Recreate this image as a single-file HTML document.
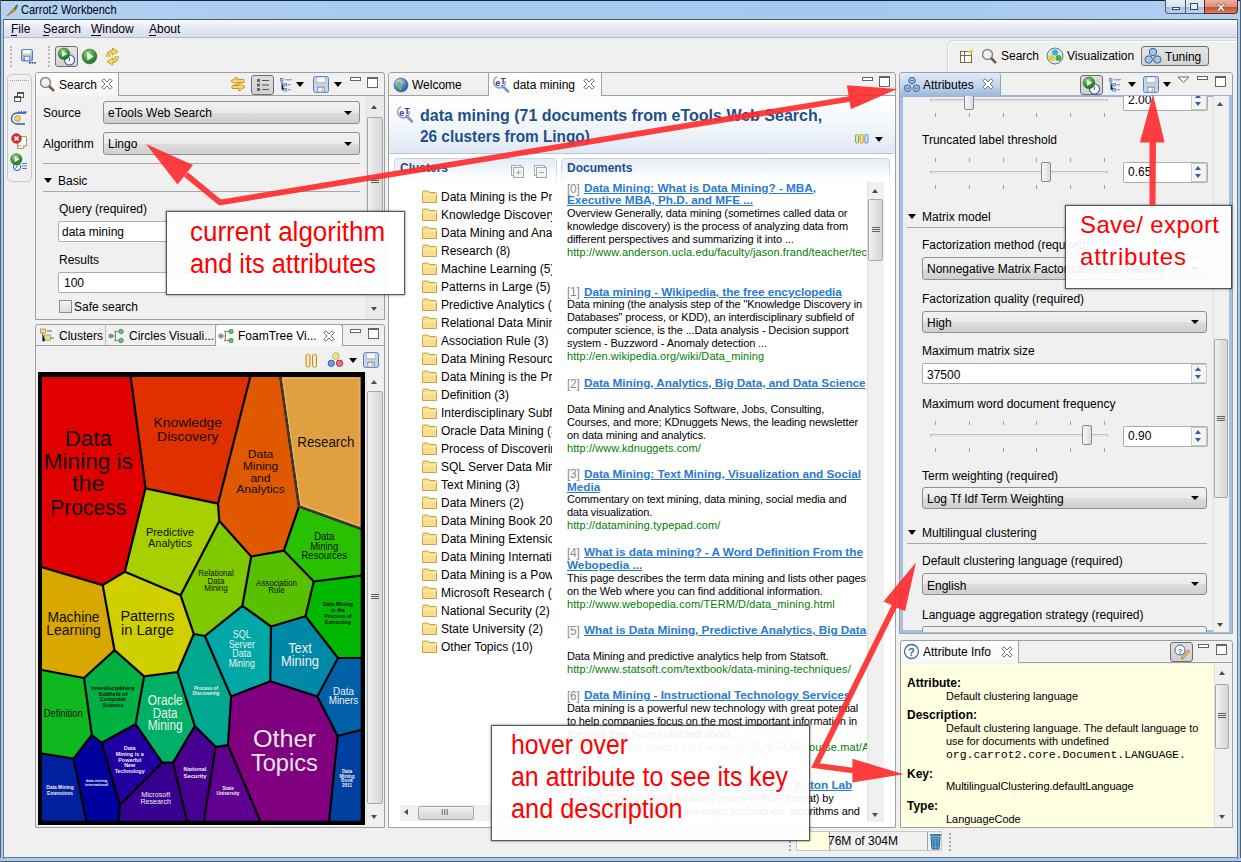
<!DOCTYPE html>
<html><head><meta charset="utf-8">
<style>
*{box-sizing:border-box;margin:0;padding:0}
html,body{width:1241px;height:862px;overflow:hidden;background:#f0f0f0;font-family:"Liberation Sans",sans-serif;font-size:12px;color:#000}
.a{position:absolute}
.t{position:absolute;white-space:pre;line-height:1}
.panel{position:absolute;border:1px solid #a0a0a0;border-radius:3px 3px 0 0;background:#f0f0f0}
.tabline{position:absolute;height:1px;background:#a0a0a0}
.combo{position:absolute;border:1px solid #8e8f8f;border-radius:3px;background:linear-gradient(#f2f2f2,#ebebeb 50%,#dddddd 51%,#cfcfcf)}
.combo:after{content:"";position:absolute;right:7px;top:50%;margin-top:-2px;border-left:4px solid transparent;border-right:4px solid transparent;border-top:4px solid #000}
.field{position:absolute;background:#fff;border:1px solid #abadb3;border-top-color:#abadb3;border-radius:2px}
.sb{position:absolute;background:#eaeaea;border-left:1px solid #e0e0e0}
.thumb{position:absolute;border:1px solid #a8a8a8;border-radius:2px;background:linear-gradient(90deg,#f3f3f3,#e2e2e2 50%,#d6d6d6)}
.up{position:absolute;width:0;height:0;border-left:3.5px solid transparent;border-right:3.5px solid transparent;border-bottom:4px solid #4d4d4d}
.dn{position:absolute;width:0;height:0;border-left:3.5px solid transparent;border-right:3.5px solid transparent;border-top:4px solid #4d4d4d}
.tri{position:absolute;width:0;height:0;border-left:4px solid transparent;border-right:4px solid transparent;border-top:5px solid #000}
.minb{position:absolute;width:11px;height:4px;border:1px solid #666;background:#fff}
.maxb{position:absolute;width:11px;height:11px;border:1px solid #666;border-top-width:2px;background:#fff}
.doc{position:absolute;left:567px;font-size:11px;line-height:13px;white-space:pre;color:#000}
.dt{color:#2477d0;font-weight:bold;text-decoration:underline;font-size:11.5px}
.dn2{color:#8a8a8a}
.url{color:#008000}
.lbl{position:absolute;white-space:pre;font-size:12px;line-height:1}
.box{position:absolute;background:rgba(255,255,255,0.93);box-shadow:0 0 1px 1px rgba(50,50,50,0.75),0 0 3px 1px rgba(0,0,0,0.3)}
.red{position:absolute;white-space:pre;color:#ff0000;font-size:27px;line-height:1;transform-origin:0 0}
.grip{position:absolute;width:8px;height:5px;border-top:1px solid #606060;border-bottom:1px solid #606060;background:linear-gradient(#606060,#606060) 0 1px/100% 1px no-repeat}
</style></head><body>
<!-- window frame -->
<div class="a" style="left:0;top:0;width:1241px;height:19px;background:linear-gradient(90deg,#b4d2f2,#a6caf0 30%,#a4c8ef 70%,#b0d0f2)"></div>
<div class="a" style="left:0;top:0;width:1241px;height:1px;background:#1a2433"></div>
<div class="a" style="left:0;top:19px;width:4px;height:843px;background:#a6caf0"></div>
<div class="a" style="left:0;top:0;width:1px;height:862px;background:#54606e"></div>
<div class="a" style="left:1237px;top:19px;width:4px;height:843px;background:#a6caf0"></div>
<div class="a" style="left:1240px;top:0;width:1px;height:862px;background:#54606e"></div>
<div class="a" style="left:0;top:858px;width:1241px;height:4px;background:#a6caf0"></div>
<div class="a" style="left:0;top:861px;width:1241px;height:1px;background:#54606e"></div>
<div class="a" style="left:4px;top:19px;width:1233px;height:1px;background:#4a5a6c"></div>
<div class="a" style="left:3px;top:19px;width:1px;height:840px;background:#6a7c90"></div>
<div class="a" style="left:1237px;top:19px;width:1px;height:840px;background:#6a7c90"></div>
<div class="a" style="left:3px;top:857px;width:1235px;height:1px;background:#6a7c90"></div>
<!-- carrot icon -->
<svg class="a" style="left:5px;top:3px" width="14" height="14" viewBox="0 0 14 14"><path d="M2 13 L9 5 L11 7 Z" fill="#f08c20" stroke="#a05010" stroke-width="0.6"/><path d="M9 5 L12 1 L13 3 L11 7 Z" fill="#3a8a30"/></svg>
<div class="t" style="left:21px;top:4px;font-size:12px;color:#000;transform:scaleX(0.92);transform-origin:0 0">Carrot2 Workbench</div>
<!-- window buttons -->
<div class="a" style="left:1165px;top:0;width:21px;height:14px;border:1px solid #4a5a70;border-top:none;border-right:none;border-radius:0 0 0 4px;background:linear-gradient(#e4edf8,#d4e2f2 50%,#a8bcd8 51%,#c0d4ec)"></div>
<div class="a" style="left:1185px;top:0;width:20px;height:14px;border-left:1px solid #4a5a70;border-bottom:1px solid #4a5a70;background:linear-gradient(#e4edf8,#d4e2f2 50%,#a8bcd8 51%,#c0d4ec)"></div>
<div class="a" style="left:1204px;top:0;width:34px;height:14px;border:1px solid #5a2a20;border-top:none;border-radius:0 0 4px 0;background:linear-gradient(#eeb0a0,#e09080 50%,#c04830 51%,#e08060)"></div>
<div class="a" style="left:1172px;top:7px;width:8px;height:3px;border:1px solid #3a4a60;background:#fff"></div>
<div class="a" style="left:1190px;top:3px;width:8px;height:7px;border:1px solid #3a4a60;background:#e8eef6"></div>
<svg class="a" style="left:1216px;top:3px" width="10" height="9" viewBox="0 0 10 9"><path d="M1 1.5 L2.5 0.5 L5 3 L7.5 0.5 L9 1.5 L6.5 4.5 L9 7.5 L7.5 8.5 L5 6 L2.5 8.5 L1 7.5 L3.5 4.5Z" fill="#fff" stroke="#6a4a40" stroke-width="0.7"/></svg>
<!-- menu bar -->
<div class="a" style="left:4px;top:20px;width:1233px;height:18px;background:linear-gradient(#fafcfe,#e4e9f4 45%,#d8ddec)"></div>
<div class="a" style="left:4px;top:37px;width:1233px;height:1px;background:#b6bccc"></div>
<div class="t" style="left:11px;top:23px">File</div>
<div class="a" style="left:11px;top:35px;width:6px;height:1px;background:#000"></div>
<div class="t" style="left:43px;top:23px">Search</div>
<div class="a" style="left:43px;top:35px;width:6px;height:1px;background:#000"></div>
<div class="t" style="left:91px;top:23px">Window</div>
<div class="a" style="left:91px;top:35px;width:10px;height:1px;background:#000"></div>
<div class="t" style="left:149px;top:23px">About</div>
<div class="a" style="left:149px;top:35px;width:7px;height:1px;background:#000"></div>
<!-- main toolbar -->
<div class="a" style="left:10px;top:46px;width:2px;height:21px;border-left:2px dotted #b8b8b8"></div>
<svg class="a" style="left:20px;top:48px" width="18" height="18" viewBox="0 0 18 18"><defs><linearGradient id="fl" x1="0" y1="0" x2="0" y2="1"><stop offset="0" stop-color="#c8d8ee"/><stop offset="1" stop-color="#8aa6d0"/></linearGradient></defs><rect x="1.5" y="1.5" width="11" height="11.5" rx="1.2" fill="url(#fl)" stroke="#5a7cb0"/><rect x="3.5" y="2" width="7" height="4.5" fill="#fff"/><rect x="3.5" y="5.5" width="7" height="1" fill="#f0c060"/><rect x="4.5" y="8.5" width="5" height="4" fill="#e8eef8" stroke="#5a7cb0" stroke-width="0.6"/><rect x="9" y="14" width="1.6" height="1.6" fill="#1a3a80"/><rect x="11.6" y="14" width="1.6" height="1.6" fill="#1a3a80"/><rect x="14.2" y="14" width="1.6" height="1.6" fill="#1a3a80"/></svg>
<div class="a" style="left:48px;top:46px;width:2px;height:21px;border-left:2px dotted #b8b8b8"></div>
<div class="a" style="left:55px;top:46px;width:23px;height:21px;border:1px solid #6f6f6f;border-radius:3px;background:linear-gradient(#e4e4e4,#d2d2d2)"></div>
<svg class="a" style="left:57px;top:47px" width="20" height="20" viewBox="0 0 20 20"><defs><radialGradient id="gp" cx="0.4" cy="0.3" r="0.7"><stop offset="0" stop-color="#9ad890"/><stop offset="0.6" stop-color="#3a9a3a"/><stop offset="1" stop-color="#1f6a1f"/></radialGradient></defs><circle cx="12.5" cy="13" r="5" fill="#fff" stroke="#2a5ab0" stroke-width="1.1"/><path d="M12.5 10.5V13.5H11.5" stroke="#2a5ab0" stroke-width="0.9" fill="none"/><circle cx="7" cy="6.8" r="5.8" fill="url(#gp)" stroke="#2a6a2a" stroke-width="0.6"/><path d="M5.2 3.8 L10 6.8 L5.2 9.8Z" fill="#fff"/></svg>
<svg class="a" style="left:81px;top:48px" width="17" height="17" viewBox="0 0 17 17"><defs><radialGradient id="gp2" cx="0.4" cy="0.3" r="0.75"><stop offset="0" stop-color="#a8e098"/><stop offset="0.55" stop-color="#3a9a3a"/><stop offset="1" stop-color="#1f6a1f"/></radialGradient></defs><circle cx="8.5" cy="8.5" r="7.3" fill="url(#gp2)" stroke="#2a6a2a" stroke-width="0.7"/><path d="M6.3 4.5 L12.5 8.5 L6.3 12.5Z" fill="#fff"/></svg>
<svg class="a" style="left:103px;top:47px" width="19" height="19" viewBox="0 0 19 19"><g fill="none" stroke-linecap="butt"><path d="M5 10 Q5 5 10 4.5" stroke="#c08a10" stroke-width="3.6"/><path d="M14 9 Q14 14 9 14.5" stroke="#c08a10" stroke-width="3.6"/></g><path d="M9.5 1 L15 4.5 L9.5 8Z M9.5 11 L4 14.5 L9.5 18Z" fill="#f8d860" stroke="#c08a10" stroke-width="0.8" stroke-linejoin="round"/><g fill="none"><path d="M5 10 Q5 5 10.5 4.5" stroke="#f8d860" stroke-width="2"/><path d="M14 9 Q14 14 8.5 14.5" stroke="#f8d860" stroke-width="2"/></g></svg>
<!-- perspective bar -->
<div class="a" style="left:948px;top:41px;width:289px;height:32px;border-top:1px solid #fff;border-left:1px solid #fff;border-radius:6px 0 0 0;background:#f0f0f0;box-shadow:-1px -1px 0 #d8d8d8"></div>
<svg class="a" style="left:959px;top:48px" width="16" height="16" viewBox="0 0 16 16"><rect x="1.5" y="3.5" width="11" height="11" fill="#fff" stroke="#7a6a40"/><path d="M1.5 7.5H12.5M5.5 3.5V14.5" stroke="#7a6a40"/><path d="M12 0.5 L13 3 L15.5 3.5 L13 4.5 L12 7 L11 4.5 L8.5 3.5 L11 3Z" fill="#f0c020"/></svg>
<svg class="a" style="left:981px;top:48px" width="17" height="17" viewBox="0 0 17 17"><circle cx="6.5" cy="6.5" r="5" fill="#eef2f6" stroke="#808890" stroke-width="1.5"/><path d="M10 10 L15 15" stroke="#7a5a3a" stroke-width="2.5"/></svg>
<div class="t" style="left:1001px;top:50px">Search</div>
<svg class="a" style="left:1046px;top:47px" width="18" height="18" viewBox="0 0 18 18"><circle cx="9" cy="9" r="8" fill="#dde6ee" stroke="#6a7a80"/><circle cx="9" cy="5.5" r="3" fill="#3ab0e0"/><circle cx="5.5" cy="11" r="3" fill="#e0d030"/><circle cx="12.5" cy="11" r="3" fill="#40b040"/></svg>
<div class="t" style="left:1067px;top:50px">Visualization</div>
<div class="a" style="left:1141px;top:46px;width:68px;height:20px;border:1px solid #6f6f6f;border-radius:3px;background:linear-gradient(#e4e4e4,#d4d4d4)"></div>
<svg class="a" style="left:1144px;top:47px" width="18" height="18" viewBox="0 0 18 18"><g fill="#a9c4e4" stroke="#36649a"><circle cx="9" cy="5" r="3.7"/><circle cx="4.7" cy="12.5" r="3.7"/><circle cx="13.3" cy="12.5" r="3.7"/></g></svg>
<div class="t" style="left:1165px;top:51px">Tuning</div>
<!-- trim stack -->
<div class="a" style="left:7px;top:74px;width:25px;height:108px;border:1px solid #c8c8c8;border-radius:5px;background:#f0f0f0"></div>
<div class="a" style="left:10px;top:80px;width:19px;height:1px;border-top:1px dotted #a0a0a0"></div>
<svg class="a" style="left:14px;top:92px" width="10" height="10" viewBox="0 0 10 10"><rect x="3.5" y="0.5" width="6" height="5" fill="#fff" stroke="#555"/><rect x="3.5" y="0.5" width="6" height="1.5" fill="#555"/><rect x="0.5" y="4.5" width="6" height="5" fill="#fff" stroke="#555"/><rect x="0.5" y="4.5" width="6" height="1.5" fill="#555"/></svg>
<svg class="a" style="left:10px;top:110px" width="17" height="16" viewBox="0 0 17 16"><path d="M15 14 H7 A5.5 5.5 0 0 1 7 3 H16" fill="none" stroke="#1a5ab0" stroke-width="1.3"/><path d="M9 3V1M11.5 3V1M14 3V1M16 3V1" stroke="#1a5ab0" stroke-width="1"/><circle cx="7.5" cy="8.5" r="3" fill="#f4c0a0" stroke="#d0a010" stroke-width="1"/></svg>
<svg class="a" style="left:11px;top:133px" width="17" height="17" viewBox="0 0 17 17"><path d="M6.5 3.5 H15.5 V12.5 L12.5 15.5 H6.5Z" fill="#f8fbff" stroke="#b08a40" stroke-width="0.9"/><path d="M12.5 15.5 V12.5 H15.5" fill="#f0d8a0" stroke="#b08a40" stroke-width="0.7"/><circle cx="5.5" cy="5.5" r="4.8" fill="#e02a2a" stroke="#a01010" stroke-width="0.6"/><path d="M3.6 3.6 L7.4 7.4 M7.4 3.6 L3.6 7.4" stroke="#fff" stroke-width="1.6"/><path d="M7 13H8M9 13H10" stroke="#1a5ab0"/></svg>
<svg class="a" style="left:10px;top:153px" width="18" height="19" viewBox="0 0 18 19"><circle cx="7" cy="14" r="3.6" fill="#fff" stroke="#1a5ab0" stroke-width="1"/><path d="M7 11.5V14L5 15.5" stroke="#1a5ab0" stroke-width="0.9" fill="none"/><path d="M12 10.5H17M12 13H17M12 15.5H17" stroke="#5a7ab8" stroke-width="1"/><circle cx="6.3" cy="6.3" r="5.6" fill="url(#gp2)" stroke="#2a6a2a" stroke-width="0.6"/><path d="M4.8 3.5 L9.5 6.3 L4.8 9.1Z" fill="#fff"/></svg>
<!-- status bar -->
<div class="a" style="left:789px;top:833px;width:2px;height:18px;border-left:2px dotted #a8a8a8"></div>
<div class="a" style="left:796px;top:831px;width:146px;height:20px;border:1px solid #c8c8c8;background:#f0f0f0"></div>
<div class="a" style="left:797px;top:832px;width:33px;height:18px;background:#ffffe1;border-right:1px solid #a0a0a0"></div>
<div class="a" style="left:927px;top:832px;width:1px;height:18px;background:#a0a0a0"></div>
<div class="t" style="left:828px;top:835px;font-size:12px">76M of 304M</div>
<svg class="a" style="left:929px;top:832px" width="13" height="18" viewBox="0 0 13 18"><rect x="1" y="2" width="11" height="2" fill="#3a80b0"/><path d="M2 5 H11 L10 17 H3Z" fill="#5aa0d0" stroke="#2a6090"/><path d="M5 7V15M8 7V15" stroke="#2a6090"/></svg>
<div class="a" style="left:949px;top:833px;width:2px;height:18px;border-left:2px dotted #a8a8a8"></div>
<!-- SEARCH PANEL -->
<div class="panel" style="left:35px;top:72px;width:350px;height:248px"></div>
<div class="a" style="left:36px;top:73px;width:83px;height:23px;background:linear-gradient(#fff,#f4f4f4);border-right:1px solid #a0a0a0;border-radius:3px 0 0 0"></div>
<div class="tabline" style="left:119px;top:95px;width:265px"></div>
<svg class="a" style="left:39px;top:76px" width="17" height="17" viewBox="0 0 17 17"><circle cx="6.5" cy="6.5" r="5" fill="#eef2f6" stroke="#808890" stroke-width="1.5"/><path d="M10 10 L15 15" stroke="#7a5a3a" stroke-width="2.5"/></svg>
<div class="t" style="left:59px;top:79px">Search</div>
<svg class="a" style="left:101px;top:78px" width="12" height="12" viewBox="0 0 12 12"><path d="M0.8 2.8 L2.8 0.8 L6 4 L9.2 0.8 L11.2 2.8 L8 6 L11.2 9.2 L9.2 11.2 L6 8 L2.8 11.2 L0.8 9.2 L4 6 Z" fill="#fff" stroke="#707070" stroke-width="1" stroke-linejoin="round"/></svg>
<svg class="a" style="left:229px;top:75px" width="18" height="18" viewBox="0 0 18 18"><path d="M8 2 L2 6 L8 10 V7.5 H15 V4.5 H8Z" fill="#f8d860" stroke="#c08010" stroke-width="0.8"/><path d="M10 8 L16 12 L10 16 V13.5 H3 V10.5 H10Z" fill="#f8d860" stroke="#c08010" stroke-width="0.8"/></svg>
<div class="a" style="left:251px;top:75px;width:23px;height:20px;border:1px solid #6f6f6f;border-radius:3px;background:linear-gradient(#dedede,#d0d0d0)"></div>
<svg class="a" style="left:256px;top:78px" width="14" height="14" viewBox="0 0 14 14"><g fill="#666"><rect x="1" y="1" width="3" height="3"/><rect x="1" y="5.5" width="3" height="3"/><rect x="1" y="10" width="3" height="3"/></g><path d="M6 2.5H13M6 7H13M6 11.5H13" stroke="#555"/></svg>
<svg class="a" style="left:280px;top:78px" width="14" height="14" viewBox="0 0 14 14"><g fill="#c8d8f0" stroke="#5a7ab8" stroke-width="0.8"><rect x="0.5" y="0.5" width="2.5" height="2.5"/><rect x="4" y="5.5" width="2.5" height="2.5"/><rect x="4" y="10.5" width="2.5" height="2.5"/></g><path d="M1.8 3V11.8H4M1.8 6.8H4M7.5 6.8H11M7.5 11.8H11M5 1.8H12" stroke="#5a7ab8" stroke-width="0.9"/></svg>
<div class="tri" style="left:296px;top:82px"></div>
<svg class="a" style="left:313px;top:76px" width="16" height="17" viewBox="0 0 16 17"><rect x="0.5" y="0.5" width="15" height="16" rx="2" fill="#c4d6ee" stroke="#5a80b8"/><rect x="3.5" y="1" width="9" height="6" fill="#f6f9fd" stroke="#8aa6d0" stroke-width="0.6"/><rect x="3.5" y="6" width="9" height="1.2" fill="#e8c070"/><rect x="4" y="10.5" width="8" height="6" fill="#8aa8d0"/><rect x="5.3" y="12" width="5.4" height="3.5" fill="#f4f4f4"/><rect x="8.6" y="12.5" width="1.5" height="2.5" fill="#e0b050"/></svg>
<div class="tri" style="left:334px;top:82px"></div>
<div class="minb" style="left:350px;top:77px"></div>
<div class="maxb" style="left:367px;top:77px"></div>
<!-- search content -->
<div class="t" style="left:43px;top:107px">Source</div>
<div class="combo" style="left:103px;top:101px;width:257px;height:23px"></div>
<div class="t" style="left:108px;top:107px">eTools Web Search</div>
<div class="t" style="left:43px;top:138px">Algorithm</div>
<div class="combo" style="left:103px;top:132px;width:257px;height:23px"></div>
<div class="t" style="left:108px;top:138px">Lingo</div>
<div class="a" style="left:43px;top:163px;width:317px;height:1px;background:#a8a8a8"></div>
<div class="tri" style="left:44px;top:178px"></div>
<div class="t" style="left:58px;top:175px">Basic</div>
<div class="a" style="left:43px;top:191px;width:317px;height:1px;background:#a8a8a8"></div>
<div class="t" style="left:59px;top:203px">Query (required)</div>
<div class="field" style="left:58px;top:221px;width:302px;height:21px"></div>
<div class="t" style="left:62px;top:226px">data mining</div>
<div class="t" style="left:59px;top:254px">Results</div>
<div class="field" style="left:58px;top:272px;width:302px;height:21px"></div>
<div class="t" style="left:64px;top:277px">100</div>
<div class="a" style="left:59px;top:300px;width:13px;height:13px;border:1px solid #8f8f8f;background:linear-gradient(#f4f4f4,#dcdcdc)"></div>
<div class="t" style="left:74px;top:301px">Safe search</div>
<div class="sb" style="left:366px;top:96px;width:18px;height:223px"></div>
<div class="up" style="left:371px;top:105px"></div>
<div class="thumb" style="left:367px;top:117px;width:16px;height:130px"></div><div class="grip" style="left:371px;top:178px"></div>
<div class="dn" style="left:371px;top:307px"></div>

<!-- BOTTOM LEFT PANEL -->
<div class="panel" style="left:35px;top:324px;width:350px;height:504px"></div>
<div class="tabline" style="left:36px;top:345px;width:179px"></div>
<div class="tabline" style="left:342px;top:345px;width:42px"></div>
<div class="a" style="left:105px;top:325px;width:1px;height:20px;background:#c0c0c0"></div>
<div class="a" style="left:215px;top:324px;width:128px;height:22px;background:linear-gradient(#fff,#f6f6f6);border-left:1px solid #a0a0a0;border-right:1px solid #a0a0a0;border-top:1px solid #a0a0a0;border-radius:3px 3px 0 0"></div>
<svg class="a" style="left:40px;top:328px" width="16" height="16" viewBox="0 0 16 16"><rect x="0.5" y="1" width="5" height="4" fill="#f0d890" stroke="#b89040" stroke-width="0.8"/><rect x="4.5" y="7" width="6" height="5" fill="#f0d890" stroke="#b89040" stroke-width="0.8"/><path d="M2.5 5V13H5M7 3H12M11 10H14" stroke="#3a6ab0"/></svg>
<div class="t" style="left:59px;top:330px">Clusters</div>
<svg class="a" style="left:108px;top:328px" width="17" height="16" viewBox="0 0 17 16"><path d="M4 8H7.5M7.5 3.5V12.5M7.5 3.5H11M7.5 12.5H11" stroke="#707880" stroke-width="0.9" fill="none"/><path d="M6 2.5L7.5 3.5L6 4.5M6 11.5L7.5 12.5L6 13.5" stroke="#707880" stroke-width="0.7" fill="none"/><circle cx="2.8" cy="8" r="2" fill="#6ab86a" stroke="#3a7a3a" stroke-width="0.6"/><circle cx="13" cy="3.5" r="2.3" fill="#6ab86a" stroke="#3a7a3a" stroke-width="0.6"/><circle cx="13" cy="12.5" r="2.3" fill="#6ab86a" stroke="#3a7a3a" stroke-width="0.6"/></svg>
<div class="t" style="left:129px;top:330px">Circles Visuali...</div>
<svg class="a" style="left:218px;top:328px" width="17" height="16" viewBox="0 0 17 16"><path d="M4 8H7.5M7.5 3.5V12.5M7.5 3.5H11M7.5 12.5H11" stroke="#707880" stroke-width="0.9" fill="none"/><path d="M6 2.5L7.5 3.5L6 4.5M6 11.5L7.5 12.5L6 13.5" stroke="#707880" stroke-width="0.7" fill="none"/><circle cx="2.8" cy="8" r="2" fill="#6ab86a" stroke="#3a7a3a" stroke-width="0.6"/><circle cx="13" cy="3.5" r="2.3" fill="#6ab86a" stroke="#3a7a3a" stroke-width="0.6"/><circle cx="13" cy="12.5" r="2.3" fill="#6ab86a" stroke="#3a7a3a" stroke-width="0.6"/></svg>
<div class="t" style="left:238px;top:330px">FoamTree Vi...</div>
<svg class="a" style="left:323px;top:330px" width="12" height="12" viewBox="0 0 12 12"><path d="M0.8 2.8 L2.8 0.8 L6 4 L9.2 0.8 L11.2 2.8 L8 6 L11.2 9.2 L9.2 11.2 L6 8 L2.8 11.2 L0.8 9.2 L4 6 Z" fill="#fff" stroke="#707070" stroke-width="1" stroke-linejoin="round"/></svg>
<div class="minb" style="left:350px;top:329px"></div>
<div class="maxb" style="left:368px;top:328px"></div>
<svg class="a" style="left:305px;top:354px" width="13" height="14" viewBox="0 0 13 14"><defs><linearGradient id="pz" x1="0" x2="1"><stop offset="0" stop-color="#f0c860"/><stop offset="0.5" stop-color="#fffbe8"/><stop offset="1" stop-color="#f0c860"/></linearGradient></defs><rect x="1" y="0.5" width="4" height="12.5" rx="1.3" fill="url(#pz)" stroke="#c09020"/><rect x="7.5" y="0.5" width="4" height="12.5" rx="1.3" fill="url(#pz)" stroke="#c09020"/></svg>
<svg class="a" style="left:327px;top:352px" width="17" height="17" viewBox="0 0 17 17"><circle cx="8.8" cy="4" r="3.2" fill="#f4ee90" stroke="#b8a840" stroke-width="0.9"/><circle cx="4.3" cy="11.3" r="3.2" fill="#6aa4d8" stroke="#2a5a98" stroke-width="0.9"/><circle cx="12.6" cy="11.3" r="3.2" fill="#f07080" stroke="#b02030" stroke-width="0.9"/><path d="M7.8 4H9.8M3.3 11.3H5.3M11.6 11.3H13.6" stroke="#888" stroke-width="0.6"/></svg>
<div class="tri" style="left:349px;top:358px"></div>
<svg class="a" style="left:363px;top:352px" width="16" height="16" viewBox="0 0 16 16"><rect x="0.5" y="0.5" width="15" height="15" rx="2" fill="#c4d6ee" stroke="#5a80b8"/><rect x="3.5" y="1" width="9" height="6" fill="#f6f9fd" stroke="#8aa6d0" stroke-width="0.6"/><rect x="3.5" y="6" width="9" height="1.2" fill="#e8c070"/><rect x="4" y="9.5" width="8" height="6" fill="#8aa8d0"/><rect x="5.3" y="11" width="5.4" height="3.5" fill="#f4f4f4"/><rect x="8.6" y="11.5" width="1.5" height="2.5" fill="#e0b050"/></svg>
<div class="a" style="left:38px;top:372px;width:327px;height:453px;background:#000"></div>
<svg class="a" style="left:0;top:0" width="400" height="862" viewBox="0 0 400 862">
<polygon points="42.0,377.0 130.7,377.0 145.5,488.3 124.8,571.7 102.7,585.1 42.0,567.3" fill="#e00000"/>
<polygon points="130.7,377.0 250.2,377.0 218.0,503.7 145.5,488.3" fill="#e03000"/>
<polygon points="250.2,377.0 280.4,377.0 299.0,506.5 283.8,550.6 251.2,556.5 219.3,520.9 218.0,503.7" fill="#e05800"/>
<polygon points="280.4,377.0 360.7,377.0 360.7,528.8 299.0,506.5" fill="#e0a040"/>
<polygon points="145.5,488.3 218.0,503.7 219.3,520.9 180.6,595.3 124.8,571.7" fill="#a8d000"/>
<polygon points="219.3,520.9 251.2,556.5 242.4,605.8 204.9,636.0 193.8,634.0 180.6,595.3" fill="#80c800"/>
<polygon points="251.2,556.5 283.8,550.6 313.8,581.5 305.5,616.3 271.0,626.5 242.4,605.8" fill="#58c000"/>
<polygon points="299.0,506.5 360.7,528.8 360.7,575.6 313.8,581.5 283.8,550.6" fill="#28c000"/>
<polygon points="313.8,581.5 360.7,575.6 360.7,658.0 338.0,658.0 305.5,616.3" fill="#00b800"/>
<polygon points="42.0,567.3 102.7,585.1 114.5,650.2 84.0,678.0 42.0,670.0" fill="#d8a800"/>
<polygon points="102.7,585.1 124.8,571.7 180.6,595.3 193.8,634.0 177.6,672.0 144.1,676.3 114.5,650.2" fill="#d0d000"/>
<polygon points="42.0,670.0 84.0,678.0 91.8,735.0 73.5,758.6 42.0,753.7" fill="#10b820"/>
<polygon points="84.0,678.0 114.5,650.2 144.1,676.3 135.6,724.1 101.7,742.8 91.8,735.0" fill="#00b040"/>
<polygon points="144.1,676.3 177.6,672.0 194.8,726.0 173.0,762.6 162.2,762.6 135.6,724.1" fill="#00b068"/>
<polygon points="177.6,672.0 193.8,634.0 204.9,636.0 231.1,696.5 228.0,745.2 215.7,746.8 194.8,726.0" fill="#00a890"/>
<polygon points="242.4,605.8 271.0,626.5 270.3,681.2 231.1,696.5 204.9,636.0" fill="#00a8a8"/>
<polygon points="271.0,626.5 305.5,616.3 338.0,658.0 317.3,696.5 270.3,681.2" fill="#0088a8"/>
<polygon points="338.0,658.0 360.7,658.0 360.7,730.0 337.6,736.0 317.3,696.5" fill="#0060a8"/>
<polygon points="270.3,681.2 317.3,696.5 337.6,736.0 329.1,820.7 260.1,820.7 228.0,745.2 231.1,696.5" fill="#800080"/>
<polygon points="337.6,736.0 360.7,730.0 360.7,820.7 329.1,820.7" fill="#0040a0"/>
<polygon points="42.0,753.7 73.5,758.6 86.3,820.7 42.0,820.7" fill="#0020a0"/>
<polygon points="91.8,735.0 101.7,742.8 119.8,805.0 118.8,820.7 86.3,820.7 73.5,758.6" fill="#0000a0"/>
<polygon points="101.7,742.8 135.6,724.1 162.2,762.6 119.8,805.0" fill="#2000a0"/>
<polygon points="119.8,805.0 162.2,762.6 173.0,762.6 186.9,820.7 118.8,820.7" fill="#380090"/>
<polygon points="173.0,762.6 194.8,726.0 215.7,746.8 203.9,820.7 186.9,820.7" fill="#480090"/>
<polygon points="215.7,746.8 228.0,745.2 260.1,820.7 203.9,820.7" fill="#600090"/>
<path d="M130.7 377.0L145.5 488.3 M338.0 658.0L360.7 658.0 M338.0 658.0L317.3 696.5 M338.0 658.0L305.5 616.3 M270.3 681.2L231.1 696.5 M270.3 681.2L317.3 696.5 M270.3 681.2L271.0 626.5 M135.6 724.1L101.7 742.8 M135.6 724.1L162.2 762.6 M135.6 724.1L144.1 676.3 M91.8 735.0L101.7 742.8 M91.8 735.0L73.5 758.6 M91.8 735.0L84.0 678.0 M101.7 742.8L119.8 805.0 M73.5 758.6L42.0 753.7 M73.5 758.6L86.3 820.7 M119.8 805.0L118.8 820.7 M119.8 805.0L162.2 762.6 M162.2 762.6L173.0 762.6 M173.0 762.6L194.8 726.0 M173.0 762.6L186.9 820.7 M194.8 726.0L215.7 746.8 M194.8 726.0L177.6 672.0 M231.1 696.5L228.0 745.2 M231.1 696.5L204.9 636.0 M317.3 696.5L337.6 736.0 M337.6 736.0L360.7 730.0 M337.6 736.0L329.1 820.7 M228.0 745.2L215.7 746.8 M228.0 745.2L260.1 820.7 M215.7 746.8L203.9 820.7 M145.5 488.3L218.0 503.7 M145.5 488.3L124.8 571.7 M250.2 377.0L218.0 503.7 M218.0 503.7L219.3 520.9 M280.4 377.0L299.0 506.5 M299.0 506.5L360.7 528.8 M299.0 506.5L283.8 550.6 M219.3 520.9L180.6 595.3 M219.3 520.9L251.2 556.5 M42.0 567.3L102.7 585.1 M102.7 585.1L124.8 571.7 M102.7 585.1L114.5 650.2 M124.8 571.7L180.6 595.3 M180.6 595.3L193.8 634.0 M114.5 650.2L144.1 676.3 M114.5 650.2L84.0 678.0 M193.8 634.0L177.6 672.0 M193.8 634.0L204.9 636.0 M177.6 672.0L144.1 676.3 M84.0 678.0L42.0 670.0 M251.2 556.5L283.8 550.6 M251.2 556.5L242.4 605.8 M283.8 550.6L313.8 581.5 M313.8 581.5L360.7 575.6 M313.8 581.5L305.5 616.3 M242.4 605.8L271.0 626.5 M242.4 605.8L204.9 636.0 M271.0 626.5L305.5 616.3" stroke="#000" stroke-width="2.2" stroke-linecap="round" fill="none"/>
<path d="M280.4 377 L299 506.5 L360.7 528.8" fill="none" stroke="#3a3a3a" stroke-width="2.2"/>
<path d="M282.6 378.5 L300.8 504.6 L359.5 525.8" fill="none" stroke="#f0b868" stroke-width="1"/>
<path d="M282 378.5 L359.2 378.5 L359.2 526" fill="none" stroke="#ecb060" stroke-width="1"/>
<g font-family="Liberation Sans"><text x="88.3" y="446.0" font-size="22" fill="#111" text-anchor="middle" textLength="47.0" lengthAdjust="spacingAndGlyphs">Data</text>
<text x="88.3" y="468.6" font-size="22" fill="#111" text-anchor="middle" textLength="89.0" lengthAdjust="spacingAndGlyphs">Mining is</text>
<text x="88.3" y="491.3" font-size="22" fill="#111" text-anchor="middle" textLength="32.5" lengthAdjust="spacingAndGlyphs">the</text>
<text x="88.3" y="515.0" font-size="22" fill="#111" text-anchor="middle" textLength="76.0" lengthAdjust="spacingAndGlyphs">Process</text>
<text x="187.8" y="427.4" font-size="13" fill="#111" text-anchor="middle" textLength="68.4" lengthAdjust="spacingAndGlyphs">Knowledge</text>
<text x="187.8" y="441.4" font-size="13" fill="#111" text-anchor="middle" textLength="61.4" lengthAdjust="spacingAndGlyphs">Discovery</text>
<text x="260.5" y="457.8" font-size="11" fill="#111" text-anchor="middle" textLength="25.6" lengthAdjust="spacingAndGlyphs">Data</text>
<text x="260.5" y="469.6" font-size="11" fill="#111" text-anchor="middle" textLength="35.6" lengthAdjust="spacingAndGlyphs">Mining</text>
<text x="260.5" y="481.5" font-size="11" fill="#111" text-anchor="middle" textLength="20.2" lengthAdjust="spacingAndGlyphs">and</text>
<text x="260.5" y="493.3" font-size="11" fill="#111" text-anchor="middle" textLength="48.4" lengthAdjust="spacingAndGlyphs">Analytics</text>
<text x="325.8" y="446.5" font-size="14" fill="#111" text-anchor="middle" textLength="57.0" lengthAdjust="spacingAndGlyphs">Research</text>
<text x="170.0" y="535.8" font-size="11" fill="#111" text-anchor="middle" textLength="48.2" lengthAdjust="spacingAndGlyphs">Predictive</text>
<text x="170.0" y="546.6" font-size="11" fill="#111" text-anchor="middle" textLength="43.9" lengthAdjust="spacingAndGlyphs">Analytics</text>
<text x="216.0" y="575.6" font-size="8.5" fill="#111" text-anchor="middle" textLength="35.5" lengthAdjust="spacingAndGlyphs">Relational</text>
<text x="216.0" y="583.5" font-size="8.5" fill="#111" text-anchor="middle" textLength="16.9" lengthAdjust="spacingAndGlyphs">Data</text>
<text x="216.0" y="591.4" font-size="8.5" fill="#111" text-anchor="middle" textLength="23.5" lengthAdjust="spacingAndGlyphs">Mining</text>
<text x="276.5" y="586.0" font-size="8.5" fill="#111" text-anchor="middle" textLength="40.8" lengthAdjust="spacingAndGlyphs">Association</text>
<text x="276.5" y="593.4" font-size="8.5" fill="#111" text-anchor="middle" textLength="16.4" lengthAdjust="spacingAndGlyphs">Rule</text>
<text x="324.2" y="539.7" font-size="11" fill="#111" text-anchor="middle" textLength="20.1" lengthAdjust="spacingAndGlyphs">Data</text>
<text x="324.2" y="549.6" font-size="11" fill="#111" text-anchor="middle" textLength="28.0" lengthAdjust="spacingAndGlyphs">Mining</text>
<text x="324.2" y="559.4" font-size="11" fill="#111" text-anchor="middle" textLength="45.4" lengthAdjust="spacingAndGlyphs">Resources</text>
<text x="338.0" y="605.8" font-size="5.72" fill="#111" text-anchor="middle" textLength="30.1" lengthAdjust="spacingAndGlyphs" font-weight="bold">Data Mining</text>
<text x="338.0" y="611.7" font-size="5.72" fill="#111" text-anchor="middle" textLength="13.9" lengthAdjust="spacingAndGlyphs" font-weight="bold">is the</text>
<text x="338.0" y="617.6" font-size="5.72" fill="#111" text-anchor="middle" textLength="27.2" lengthAdjust="spacingAndGlyphs" font-weight="bold">Process of</text>
<text x="338.0" y="623.5" font-size="5.72" fill="#111" text-anchor="middle" textLength="26.0" lengthAdjust="spacingAndGlyphs" font-weight="bold">Extracting</text>
<text x="73.5" y="621.6" font-size="14" fill="#111" text-anchor="middle" textLength="52.0" lengthAdjust="spacingAndGlyphs">Machine</text>
<text x="73.5" y="635.4" font-size="14" fill="#111" text-anchor="middle" textLength="54.4" lengthAdjust="spacingAndGlyphs">Learning</text>
<text x="147.4" y="620.6" font-size="14" fill="#111" text-anchor="middle" textLength="54.0" lengthAdjust="spacingAndGlyphs">Patterns</text>
<text x="147.4" y="635.4" font-size="14" fill="#111" text-anchor="middle" textLength="53.0" lengthAdjust="spacingAndGlyphs">in Large</text>
<text x="63.2" y="717.2" font-size="10" fill="#111" text-anchor="middle" textLength="38.8" lengthAdjust="spacingAndGlyphs">Definition</text>
<text x="113.0" y="689.6" font-size="5.72" fill="#111" text-anchor="middle" textLength="43.4" lengthAdjust="spacingAndGlyphs" font-weight="bold">Interdisciplinary</text>
<text x="113.0" y="695.5" font-size="5.72" fill="#111" text-anchor="middle" textLength="29.0" lengthAdjust="spacingAndGlyphs" font-weight="bold">Subfield of</text>
<text x="113.0" y="701.4" font-size="5.72" fill="#111" text-anchor="middle" textLength="26.5" lengthAdjust="spacingAndGlyphs" font-weight="bold">Computer</text>
<text x="113.0" y="707.3" font-size="5.72" fill="#111" text-anchor="middle" textLength="21.2" lengthAdjust="spacingAndGlyphs" font-weight="bold">Science</text>
<text x="165.2" y="705.4" font-size="14" fill="#eee" text-anchor="middle" textLength="35.0" lengthAdjust="spacingAndGlyphs">Oracle</text>
<text x="165.2" y="717.6" font-size="14" fill="#eee" text-anchor="middle" textLength="24.7" lengthAdjust="spacingAndGlyphs">Data</text>
<text x="165.2" y="730.0" font-size="14" fill="#eee" text-anchor="middle" textLength="35.0" lengthAdjust="spacingAndGlyphs">Mining</text>
<text x="206.0" y="689.6" font-size="4.84" fill="#eee" text-anchor="middle" textLength="24.1" lengthAdjust="spacingAndGlyphs" font-weight="bold">Process of</text>
<text x="206.0" y="694.5" font-size="4.84" fill="#eee" text-anchor="middle" textLength="27.0" lengthAdjust="spacingAndGlyphs" font-weight="bold">Discovering</text>
<text x="241.8" y="638.3" font-size="11" fill="#eee" text-anchor="middle" textLength="17.9" lengthAdjust="spacingAndGlyphs">SQL</text>
<text x="241.8" y="647.8" font-size="11" fill="#eee" text-anchor="middle" textLength="26.3" lengthAdjust="spacingAndGlyphs">Server</text>
<text x="241.8" y="657.0" font-size="11" fill="#eee" text-anchor="middle" textLength="18.9" lengthAdjust="spacingAndGlyphs">Data</text>
<text x="241.8" y="666.5" font-size="11" fill="#eee" text-anchor="middle" textLength="26.3" lengthAdjust="spacingAndGlyphs">Mining</text>
<text x="300.0" y="652.5" font-size="15" fill="#eee" text-anchor="middle" textLength="23.7" lengthAdjust="spacingAndGlyphs">Text</text>
<text x="300.0" y="666.0" font-size="15" fill="#eee" text-anchor="middle" textLength="38.0" lengthAdjust="spacingAndGlyphs">Mining</text>
<text x="343.5" y="694.5" font-size="11" fill="#eee" text-anchor="middle" textLength="20.8" lengthAdjust="spacingAndGlyphs">Data</text>
<text x="343.5" y="703.8" font-size="11" fill="#eee" text-anchor="middle" textLength="29.6" lengthAdjust="spacingAndGlyphs">Miners</text>
<text x="284.4" y="746.8" font-size="23" fill="#e8e8e8" text-anchor="middle" textLength="63.0" lengthAdjust="spacingAndGlyphs">Other</text>
<text x="284.4" y="771.4" font-size="23" fill="#e8e8e8" text-anchor="middle" textLength="67.0" lengthAdjust="spacingAndGlyphs">Topics</text>
<text x="347.0" y="772.8" font-size="4.84" fill="#eee" text-anchor="middle" textLength="10.2" lengthAdjust="spacingAndGlyphs" font-weight="bold">Data</text>
<text x="347.0" y="777.5" font-size="4.84" fill="#eee" text-anchor="middle" textLength="15.2" lengthAdjust="spacingAndGlyphs" font-weight="bold">Mining</text>
<text x="347.0" y="782.3" font-size="4.84" fill="#eee" text-anchor="middle" textLength="11.8" lengthAdjust="spacingAndGlyphs" font-weight="bold">Book</text>
<text x="347.0" y="787.0" font-size="4.84" fill="#eee" text-anchor="middle" textLength="10.2" lengthAdjust="spacingAndGlyphs" font-weight="bold">2011</text>
<text x="60.0" y="789.2" font-size="5.28" fill="#eee" text-anchor="middle" textLength="27.6" lengthAdjust="spacingAndGlyphs" font-weight="bold">Data Mining</text>
<text x="60.0" y="794.5" font-size="5.28" fill="#eee" text-anchor="middle" textLength="26.0" lengthAdjust="spacingAndGlyphs" font-weight="bold">Extensions</text>
<text x="96.6" y="782.3" font-size="4.4" fill="#eee" text-anchor="middle" textLength="21.6" lengthAdjust="spacingAndGlyphs" font-weight="bold">data mining</text>
<text x="96.6" y="786.2" font-size="4.4" fill="#eee" text-anchor="middle" textLength="23.1" lengthAdjust="spacingAndGlyphs" font-weight="bold">international</text>
<text x="129.7" y="749.7" font-size="5.72" fill="#eee" text-anchor="middle" textLength="11.8" lengthAdjust="spacingAndGlyphs" font-weight="bold">Data</text>
<text x="129.7" y="755.6" font-size="5.72" fill="#eee" text-anchor="middle" textLength="28.0" lengthAdjust="spacingAndGlyphs" font-weight="bold">Mining is a</text>
<text x="129.7" y="761.5" font-size="5.72" fill="#eee" text-anchor="middle" textLength="22.9" lengthAdjust="spacingAndGlyphs" font-weight="bold">Powerful</text>
<text x="129.7" y="767.4" font-size="5.72" fill="#eee" text-anchor="middle" textLength="11.1" lengthAdjust="spacingAndGlyphs" font-weight="bold">New</text>
<text x="129.7" y="773.3" font-size="5.72" fill="#eee" text-anchor="middle" textLength="30.0" lengthAdjust="spacingAndGlyphs" font-weight="bold">Technology</text>
<text x="155.7" y="797.0" font-size="8" fill="#eee" text-anchor="middle" textLength="29.0" lengthAdjust="spacingAndGlyphs">Microsoft</text>
<text x="155.7" y="804.0" font-size="8" fill="#eee" text-anchor="middle" textLength="30.6" lengthAdjust="spacingAndGlyphs">Research</text>
<text x="195.0" y="771.0" font-size="6.16" fill="#eee" text-anchor="middle" textLength="22.9" lengthAdjust="spacingAndGlyphs" font-weight="bold">National</text>
<text x="195.0" y="777.7" font-size="6.16" fill="#eee" text-anchor="middle" textLength="22.9" lengthAdjust="spacingAndGlyphs" font-weight="bold">Security</text>
<text x="228.0" y="790.2" font-size="4.84" fill="#eee" text-anchor="middle" textLength="11.7" lengthAdjust="spacingAndGlyphs" font-weight="bold">State</text>
<text x="228.0" y="795.0" font-size="4.84" fill="#eee" text-anchor="middle" textLength="23.1" lengthAdjust="spacingAndGlyphs" font-weight="bold">University</text></g>
</svg>
<div class="sb" style="left:366px;top:372px;width:18px;height:454px;background:#f0f0f0"></div>
<div class="up" style="left:371px;top:380px"></div>
<div class="thumb" style="left:367px;top:391px;width:16px;height:413px"></div>
<div class="grip" style="left:371px;top:594px"></div>
<div class="dn" style="left:371px;top:815px"></div>
<!-- EDITOR PANEL -->
<div class="panel" style="left:388px;top:72px;width:508px;height:756px;background:#fff"></div>
<div class="a" style="left:389px;top:73px;width:506px;height:23px;background:#f0f0f0;border-radius:3px 3px 0 0"></div>
<div class="a" style="left:389px;top:73px;width:100px;height:23px;background:linear-gradient(#f4f4f4,#ececec);border-right:1px solid #a0a0a0;border-radius:3px 0 0 0"></div>
<div class="a" style="left:489px;top:73px;width:113px;height:23px;background:linear-gradient(#fff,#fafafa);border-right:1px solid #a0a0a0"></div>
<div class="tabline" style="left:389px;top:95px;width:100px"></div>
<div class="tabline" style="left:602px;top:95px;width:293px"></div>
<svg class="a" style="left:393px;top:77px" width="16" height="16" viewBox="0 0 16 16"><defs><radialGradient id="gl" cx="0.35" cy="0.3" r="0.8"><stop offset="0" stop-color="#d8ecff"/><stop offset="0.5" stop-color="#4a8ed8"/><stop offset="1" stop-color="#1a4a90"/></radialGradient></defs><circle cx="8" cy="8" r="7" fill="url(#gl)" stroke="#3a5a80" stroke-width="0.6"/><path d="M4 5 Q7 4 8 6 Q7 9 9 11 Q8 13 7 14 Q5 11 5 9 Q3 7 4 5Z" fill="#8ab040"/><path d="M10 3 Q12 4 12 6 Q10 6 10 3Z" fill="#c0b040"/></svg>
<div class="t" style="left:412px;top:79px">Welcome</div>
<svg class="a" style="left:492px;top:75px" width="20" height="20" viewBox="0 0 20 20"><path d="M5 1.8 A5.8 5.8 0 1 0 13.2 6" fill="none" stroke="#8aa4d0" stroke-width="1.7"/><path d="M10.5 11 L16 16.5" stroke="#7a98c8" stroke-width="2.6" stroke-linecap="round"/><text x="3.2" y="10.5" font-size="9" font-weight="bold" fill="#4a3070" font-family="Liberation Sans">e</text><text x="8.6" y="8.5" font-size="8.5" font-weight="bold" fill="#4a3070" font-family="Liberation Sans">T</text></svg>
<div class="t" style="left:513px;top:79px">data mining</div>
<svg class="a" style="left:583px;top:78px" width="12" height="12" viewBox="0 0 12 12"><path d="M0.8 2.8 L2.8 0.8 L6 4 L9.2 0.8 L11.2 2.8 L8 6 L11.2 9.2 L9.2 11.2 L6 8 L2.8 11.2 L0.8 9.2 L4 6 Z" fill="#fff" stroke="#707070" stroke-width="1" stroke-linejoin="round"/></svg>
<div class="minb" style="left:862px;top:77px"></div>
<div class="maxb" style="left:879px;top:76px"></div>
<!-- header -->
<div class="a" style="left:389px;top:96px;width:506px;height:58px;background:linear-gradient(#ffffff,#f6f9fc 40%,#dfe8f3)"></div>
<div class="a" style="left:389px;top:153px;width:504px;height:1px;background:#b4c8e0"></div>
<svg class="a" style="left:396px;top:105px" width="20" height="20" viewBox="0 0 20 20"><path d="M5 1.8 A5.8 5.8 0 1 0 13.2 6" fill="none" stroke="#8aa4d0" stroke-width="1.7"/><path d="M10.5 11 L16 16.5" stroke="#7a98c8" stroke-width="2.6" stroke-linecap="round"/><text x="3.2" y="10.5" font-size="9" font-weight="bold" fill="#4a3070" font-family="Liberation Sans">e</text><text x="8.6" y="8.5" font-size="8.5" font-weight="bold" fill="#4a3070" font-family="Liberation Sans">T</text></svg>
<div class="t" style="left:420px;top:108px;font-size:16px;font-weight:bold;color:#1c4f8b">data mining (71 documents from eTools Web Search,</div>
<div class="t" style="left:420px;top:129px;font-size:16px;font-weight:bold;color:#1c4f8b;transform:scaleX(0.96);transform-origin:0 0">26 clusters from Lingo)</div>
<svg class="a" style="left:855px;top:134px" width="15" height="10" viewBox="0 0 15 10"><rect x="0.5" y="0.5" width="3" height="8.5" rx="1" fill="#e0eab0" stroke="#80a860"/><rect x="5.2" y="0.5" width="3" height="8.5" rx="1" fill="#f8e088" stroke="#c8a020"/><rect x="9.9" y="0.5" width="3" height="8.5" rx="1" fill="#e0eaf8" stroke="#6a88b8"/></svg>
<div class="tri" style="left:875px;top:137px"></div>
<!-- clusters section -->
<div class="a" style="left:394px;top:158px;width:163px;height:26px;border:1px solid #c8d6e8;border-bottom:none;border-radius:4px 4px 0 0;background:linear-gradient(#e6edf6,#ffffff 24px)"></div><div class="a" style="left:393px;top:168px;width:166px;height:18px;background:linear-gradient(rgba(255,255,255,0),#fff)"></div>
<div class="t" style="left:400px;top:162px;font-weight:bold;color:#1c4f8b">Clusters</div>
<svg class="a" style="left:510px;top:164px" width="15" height="15" viewBox="0 0 15 15"><rect x="1.5" y="1.5" width="10" height="10" fill="#fff" stroke="#a8a8a8"/><rect x="3.5" y="3.5" width="10" height="10" fill="#f4f4f4" stroke="#a8a8a8"/><path d="M6 8.5H11M8.5 6V11" stroke="#a8a8a8"/></svg>
<svg class="a" style="left:533px;top:164px" width="15" height="15" viewBox="0 0 15 15"><rect x="1.5" y="1.5" width="10" height="10" fill="#fff" stroke="#a8a8a8"/><rect x="3.5" y="3.5" width="10" height="10" fill="#f4f4f4" stroke="#a8a8a8"/><path d="M6 8.5H11" stroke="#a8a8a8"/></svg>
<div class="a" style="left:395px;top:182px;width:157px;height:623px;overflow:hidden">
<svg class="a" style="left:26px;top:7px" width="17" height="15" viewBox="0 0 17 15"><path d="M1.5 3.5 Q1.5 2 3 2 H7 L8.5 3.5 H14.5 Q15.5 3.5 15.5 4.5 V13.5 H1.5Z" fill="#f7dd8c" stroke="#c9a040"/><path d="M1.5 6 H15.5" stroke="#fff2c0"/></svg>
<div class="t" style="left:46px;top:9px">Data Mining is the Process of Extracting (6)</div>
<svg class="a" style="left:26px;top:25px" width="17" height="15" viewBox="0 0 17 15"><path d="M1.5 3.5 Q1.5 2 3 2 H7 L8.5 3.5 H14.5 Q15.5 3.5 15.5 4.5 V13.5 H1.5Z" fill="#f7dd8c" stroke="#c9a040"/><path d="M1.5 6 H15.5" stroke="#fff2c0"/></svg>
<div class="t" style="left:46px;top:27px">Knowledge Discovery (6)</div>
<svg class="a" style="left:26px;top:43px" width="17" height="15" viewBox="0 0 17 15"><path d="M1.5 3.5 Q1.5 2 3 2 H7 L8.5 3.5 H14.5 Q15.5 3.5 15.5 4.5 V13.5 H1.5Z" fill="#f7dd8c" stroke="#c9a040"/><path d="M1.5 6 H15.5" stroke="#fff2c0"/></svg>
<div class="t" style="left:46px;top:45px">Data Mining and Analytics (6)</div>
<svg class="a" style="left:26px;top:61px" width="17" height="15" viewBox="0 0 17 15"><path d="M1.5 3.5 Q1.5 2 3 2 H7 L8.5 3.5 H14.5 Q15.5 3.5 15.5 4.5 V13.5 H1.5Z" fill="#f7dd8c" stroke="#c9a040"/><path d="M1.5 6 H15.5" stroke="#fff2c0"/></svg>
<div class="t" style="left:46px;top:63px">Research (8)</div>
<svg class="a" style="left:26px;top:79px" width="17" height="15" viewBox="0 0 17 15"><path d="M1.5 3.5 Q1.5 2 3 2 H7 L8.5 3.5 H14.5 Q15.5 3.5 15.5 4.5 V13.5 H1.5Z" fill="#f7dd8c" stroke="#c9a040"/><path d="M1.5 6 H15.5" stroke="#fff2c0"/></svg>
<div class="t" style="left:46px;top:81px">Machine Learning (5)</div>
<svg class="a" style="left:26px;top:97px" width="17" height="15" viewBox="0 0 17 15"><path d="M1.5 3.5 Q1.5 2 3 2 H7 L8.5 3.5 H14.5 Q15.5 3.5 15.5 4.5 V13.5 H1.5Z" fill="#f7dd8c" stroke="#c9a040"/><path d="M1.5 6 H15.5" stroke="#fff2c0"/></svg>
<div class="t" style="left:46px;top:99px">Patterns in Large (5)</div>
<svg class="a" style="left:26px;top:115px" width="17" height="15" viewBox="0 0 17 15"><path d="M1.5 3.5 Q1.5 2 3 2 H7 L8.5 3.5 H14.5 Q15.5 3.5 15.5 4.5 V13.5 H1.5Z" fill="#f7dd8c" stroke="#c9a040"/><path d="M1.5 6 H15.5" stroke="#fff2c0"/></svg>
<div class="t" style="left:46px;top:117px">Predictive Analytics (4)</div>
<svg class="a" style="left:26px;top:133px" width="17" height="15" viewBox="0 0 17 15"><path d="M1.5 3.5 Q1.5 2 3 2 H7 L8.5 3.5 H14.5 Q15.5 3.5 15.5 4.5 V13.5 H1.5Z" fill="#f7dd8c" stroke="#c9a040"/><path d="M1.5 6 H15.5" stroke="#fff2c0"/></svg>
<div class="t" style="left:46px;top:135px">Relational Data Mining (3)</div>
<svg class="a" style="left:26px;top:151px" width="17" height="15" viewBox="0 0 17 15"><path d="M1.5 3.5 Q1.5 2 3 2 H7 L8.5 3.5 H14.5 Q15.5 3.5 15.5 4.5 V13.5 H1.5Z" fill="#f7dd8c" stroke="#c9a040"/><path d="M1.5 6 H15.5" stroke="#fff2c0"/></svg>
<div class="t" style="left:46px;top:153px">Association Rule (3)</div>
<svg class="a" style="left:26px;top:169px" width="17" height="15" viewBox="0 0 17 15"><path d="M1.5 3.5 Q1.5 2 3 2 H7 L8.5 3.5 H14.5 Q15.5 3.5 15.5 4.5 V13.5 H1.5Z" fill="#f7dd8c" stroke="#c9a040"/><path d="M1.5 6 H15.5" stroke="#fff2c0"/></svg>
<div class="t" style="left:46px;top:171px">Data Mining Resources (3)</div>
<svg class="a" style="left:26px;top:187px" width="17" height="15" viewBox="0 0 17 15"><path d="M1.5 3.5 Q1.5 2 3 2 H7 L8.5 3.5 H14.5 Q15.5 3.5 15.5 4.5 V13.5 H1.5Z" fill="#f7dd8c" stroke="#c9a040"/><path d="M1.5 6 H15.5" stroke="#fff2c0"/></svg>
<div class="t" style="left:46px;top:189px">Data Mining is the Process (3)</div>
<svg class="a" style="left:26px;top:205px" width="17" height="15" viewBox="0 0 17 15"><path d="M1.5 3.5 Q1.5 2 3 2 H7 L8.5 3.5 H14.5 Q15.5 3.5 15.5 4.5 V13.5 H1.5Z" fill="#f7dd8c" stroke="#c9a040"/><path d="M1.5 6 H15.5" stroke="#fff2c0"/></svg>
<div class="t" style="left:46px;top:207px">Definition (3)</div>
<svg class="a" style="left:26px;top:223px" width="17" height="15" viewBox="0 0 17 15"><path d="M1.5 3.5 Q1.5 2 3 2 H7 L8.5 3.5 H14.5 Q15.5 3.5 15.5 4.5 V13.5 H1.5Z" fill="#f7dd8c" stroke="#c9a040"/><path d="M1.5 6 H15.5" stroke="#fff2c0"/></svg>
<div class="t" style="left:46px;top:225px">Interdisciplinary Subfield (3)</div>
<svg class="a" style="left:26px;top:241px" width="17" height="15" viewBox="0 0 17 15"><path d="M1.5 3.5 Q1.5 2 3 2 H7 L8.5 3.5 H14.5 Q15.5 3.5 15.5 4.5 V13.5 H1.5Z" fill="#f7dd8c" stroke="#c9a040"/><path d="M1.5 6 H15.5" stroke="#fff2c0"/></svg>
<div class="t" style="left:46px;top:243px">Oracle Data Mining (3)</div>
<svg class="a" style="left:26px;top:259px" width="17" height="15" viewBox="0 0 17 15"><path d="M1.5 3.5 Q1.5 2 3 2 H7 L8.5 3.5 H14.5 Q15.5 3.5 15.5 4.5 V13.5 H1.5Z" fill="#f7dd8c" stroke="#c9a040"/><path d="M1.5 6 H15.5" stroke="#fff2c0"/></svg>
<div class="t" style="left:46px;top:261px">Process of Discovering (2)</div>
<svg class="a" style="left:26px;top:277px" width="17" height="15" viewBox="0 0 17 15"><path d="M1.5 3.5 Q1.5 2 3 2 H7 L8.5 3.5 H14.5 Q15.5 3.5 15.5 4.5 V13.5 H1.5Z" fill="#f7dd8c" stroke="#c9a040"/><path d="M1.5 6 H15.5" stroke="#fff2c0"/></svg>
<div class="t" style="left:46px;top:279px">SQL Server Data Mining (2)</div>
<svg class="a" style="left:26px;top:295px" width="17" height="15" viewBox="0 0 17 15"><path d="M1.5 3.5 Q1.5 2 3 2 H7 L8.5 3.5 H14.5 Q15.5 3.5 15.5 4.5 V13.5 H1.5Z" fill="#f7dd8c" stroke="#c9a040"/><path d="M1.5 6 H15.5" stroke="#fff2c0"/></svg>
<div class="t" style="left:46px;top:297px">Text Mining (3)</div>
<svg class="a" style="left:26px;top:313px" width="17" height="15" viewBox="0 0 17 15"><path d="M1.5 3.5 Q1.5 2 3 2 H7 L8.5 3.5 H14.5 Q15.5 3.5 15.5 4.5 V13.5 H1.5Z" fill="#f7dd8c" stroke="#c9a040"/><path d="M1.5 6 H15.5" stroke="#fff2c0"/></svg>
<div class="t" style="left:46px;top:315px">Data Miners (2)</div>
<svg class="a" style="left:26px;top:331px" width="17" height="15" viewBox="0 0 17 15"><path d="M1.5 3.5 Q1.5 2 3 2 H7 L8.5 3.5 H14.5 Q15.5 3.5 15.5 4.5 V13.5 H1.5Z" fill="#f7dd8c" stroke="#c9a040"/><path d="M1.5 6 H15.5" stroke="#fff2c0"/></svg>
<div class="t" style="left:46px;top:333px">Data Mining Book 2011 (2)</div>
<svg class="a" style="left:26px;top:349px" width="17" height="15" viewBox="0 0 17 15"><path d="M1.5 3.5 Q1.5 2 3 2 H7 L8.5 3.5 H14.5 Q15.5 3.5 15.5 4.5 V13.5 H1.5Z" fill="#f7dd8c" stroke="#c9a040"/><path d="M1.5 6 H15.5" stroke="#fff2c0"/></svg>
<div class="t" style="left:46px;top:351px">Data Mining Extensions (2)</div>
<svg class="a" style="left:26px;top:367px" width="17" height="15" viewBox="0 0 17 15"><path d="M1.5 3.5 Q1.5 2 3 2 H7 L8.5 3.5 H14.5 Q15.5 3.5 15.5 4.5 V13.5 H1.5Z" fill="#f7dd8c" stroke="#c9a040"/><path d="M1.5 6 H15.5" stroke="#fff2c0"/></svg>
<div class="t" style="left:46px;top:369px">Data Mining International (2)</div>
<svg class="a" style="left:26px;top:385px" width="17" height="15" viewBox="0 0 17 15"><path d="M1.5 3.5 Q1.5 2 3 2 H7 L8.5 3.5 H14.5 Q15.5 3.5 15.5 4.5 V13.5 H1.5Z" fill="#f7dd8c" stroke="#c9a040"/><path d="M1.5 6 H15.5" stroke="#fff2c0"/></svg>
<div class="t" style="left:46px;top:387px">Data Mining is a Powerful (2)</div>
<svg class="a" style="left:26px;top:403px" width="17" height="15" viewBox="0 0 17 15"><path d="M1.5 3.5 Q1.5 2 3 2 H7 L8.5 3.5 H14.5 Q15.5 3.5 15.5 4.5 V13.5 H1.5Z" fill="#f7dd8c" stroke="#c9a040"/><path d="M1.5 6 H15.5" stroke="#fff2c0"/></svg>
<div class="t" style="left:46px;top:405px">Microsoft Research (2)</div>
<svg class="a" style="left:26px;top:421px" width="17" height="15" viewBox="0 0 17 15"><path d="M1.5 3.5 Q1.5 2 3 2 H7 L8.5 3.5 H14.5 Q15.5 3.5 15.5 4.5 V13.5 H1.5Z" fill="#f7dd8c" stroke="#c9a040"/><path d="M1.5 6 H15.5" stroke="#fff2c0"/></svg>
<div class="t" style="left:46px;top:423px">National Security (2)</div>
<svg class="a" style="left:26px;top:439px" width="17" height="15" viewBox="0 0 17 15"><path d="M1.5 3.5 Q1.5 2 3 2 H7 L8.5 3.5 H14.5 Q15.5 3.5 15.5 4.5 V13.5 H1.5Z" fill="#f7dd8c" stroke="#c9a040"/><path d="M1.5 6 H15.5" stroke="#fff2c0"/></svg>
<div class="t" style="left:46px;top:441px">State University (2)</div>
<svg class="a" style="left:26px;top:457px" width="17" height="15" viewBox="0 0 17 15"><path d="M1.5 3.5 Q1.5 2 3 2 H7 L8.5 3.5 H14.5 Q15.5 3.5 15.5 4.5 V13.5 H1.5Z" fill="#f7dd8c" stroke="#c9a040"/><path d="M1.5 6 H15.5" stroke="#fff2c0"/></svg>
<div class="t" style="left:46px;top:459px">Other Topics (10)</div>
</div>
<div class="a" style="left:400px;top:805px;width:155px;height:16px;background:#f0f0f0"></div>
<div class="a" style="left:404px;top:809px;width:0;height:0;border-top:3.5px solid transparent;border-bottom:3.5px solid transparent;border-right:4px solid #4d4d4d"></div>
<div class="thumb" style="left:418px;top:806px;width:56px;height:14px;background:linear-gradient(#f3f3f3,#e2e2e2 50%,#d6d6d6)"></div>
<div class="t" style="left:441px;top:808px;font-size:9px;color:#555">III</div>
<!-- documents section -->
<div class="a" style="left:561px;top:158px;width:329px;height:26px;border:1px solid #c8d6e8;border-bottom:none;border-radius:4px 4px 0 0;background:linear-gradient(#e6edf6,#ffffff 24px)"></div><div class="a" style="left:560px;top:168px;width:332px;height:18px;background:linear-gradient(rgba(255,255,255,0),#fff)"></div>
<div class="t" style="left:567px;top:162px;font-weight:bold;color:#1c4f8b">Documents</div>
<div class="a" style="left:562px;top:182px;width:305px;height:639px;overflow:hidden">
<div class="t" style="left:5.0px;top:0.6px;font-size:12px;color:#8a8a8a;letter-spacing:-0.3px">[0]</div>
<div class="t" style="left:22.0px;top:0.8px;font-size:11.8px;font-weight:bold;color:#2a7ad0;text-decoration:underline;letter-spacing:-0.05px">Data Mining: What is Data Mining? - MBA,</div>
<div class="t" style="left:5.0px;top:13.3px;font-size:11.8px;font-weight:bold;color:#2a7ad0;text-decoration:underline;letter-spacing:-0.05px">Executive MBA, Ph.D. and MFE ...</div>
<div class="t" style="left:5.0px;top:26.4px;font-size:11px;letter-spacing:-0.12px">Overview Generally, data mining (sometimes called data or</div>
<div class="t" style="left:5.0px;top:39.2px;font-size:11px;letter-spacing:-0.12px">knowledge discovery) is the process of analyzing data from</div>
<div class="t" style="left:5.0px;top:52.2px;font-size:11px;letter-spacing:-0.12px">different perspectives and summarizing it into ...</div>
<div class="t" style="left:5.0px;top:65.2px;font-size:11px;color:#008000;letter-spacing:0.1px">http://www.anderson.ucla.edu/faculty/jason.frand/teacher/technologies/palace/datamining.htm</div>
<div class="t" style="left:5.0px;top:104.3px;font-size:12px;color:#8a8a8a;letter-spacing:-0.3px">[1]</div>
<div class="t" style="left:22.0px;top:104.5px;font-size:11.8px;font-weight:bold;color:#2a7ad0;text-decoration:underline;letter-spacing:-0.05px">Data mining - Wikipedia, the free encyclopedia</div>
<div class="t" style="left:5.0px;top:117.2px;font-size:11px;letter-spacing:-0.12px">Data mining (the analysis step of the &quot;Knowledge Discovery in</div>
<div class="t" style="left:5.0px;top:130.2px;font-size:11px;letter-spacing:-0.12px">Databases&quot; process, or KDD), an interdisciplinary subfield of</div>
<div class="t" style="left:5.0px;top:143.2px;font-size:11px;letter-spacing:-0.12px">computer science, is the ...Data analysis - Decision support</div>
<div class="t" style="left:5.0px;top:156.2px;font-size:11px;letter-spacing:-0.12px">system - Buzzword - Anomaly detection ...</div>
<div class="t" style="left:5.0px;top:169.2px;font-size:11px;color:#008000;letter-spacing:0.1px">http://en.wikipedia.org/wiki/Data_mining</div>
<div class="t" style="left:5.0px;top:195.5px;font-size:12px;color:#8a8a8a;letter-spacing:-0.3px">[2]</div>
<div class="t" style="left:22.0px;top:195.7px;font-size:11.8px;font-weight:bold;color:#2a7ad0;text-decoration:underline;letter-spacing:-0.05px">Data Mining, Analytics, Big Data, and Data Science</div>
<div class="t" style="left:5.0px;top:221.7px;font-size:11px;letter-spacing:-0.12px">Data Mining and Analytics Software, Jobs, Consulting,</div>
<div class="t" style="left:5.0px;top:234.7px;font-size:11px;letter-spacing:-0.12px">Courses, and more; KDnuggets News, the leading newsletter</div>
<div class="t" style="left:5.0px;top:247.7px;font-size:11px;letter-spacing:-0.12px">on data mining and analytics.</div>
<div class="t" style="left:5.0px;top:260.7px;font-size:11px;color:#008000;letter-spacing:0.1px">http://www.kdnuggets.com/</div>
<div class="t" style="left:5.0px;top:286.3px;font-size:12px;color:#8a8a8a;letter-spacing:-0.3px">[3]</div>
<div class="t" style="left:22.0px;top:286.5px;font-size:11.8px;font-weight:bold;color:#2a7ad0;text-decoration:underline;letter-spacing:-0.05px">Data Mining: Text Mining, Visualization and Social</div>
<div class="t" style="left:5.0px;top:299.5px;font-size:11.8px;font-weight:bold;color:#2a7ad0;text-decoration:underline;letter-spacing:-0.05px">Media</div>
<div class="t" style="left:5.0px;top:312.2px;font-size:11px;letter-spacing:-0.12px">Commentary on text mining, data mining, social media and</div>
<div class="t" style="left:5.0px;top:325.2px;font-size:11px;letter-spacing:-0.12px">data visualization.</div>
<div class="t" style="left:5.0px;top:338.2px;font-size:11px;color:#008000;letter-spacing:0.1px">http://datamining.typepad.com/</div>
<div class="t" style="left:5.0px;top:364.7px;font-size:12px;color:#8a8a8a;letter-spacing:-0.3px">[4]</div>
<div class="t" style="left:22.0px;top:364.9px;font-size:11.8px;font-weight:bold;color:#2a7ad0;text-decoration:underline;letter-spacing:-0.05px">What is data mining? - A Word Definition From the</div>
<div class="t" style="left:5.0px;top:377.9px;font-size:11.8px;font-weight:bold;color:#2a7ad0;text-decoration:underline;letter-spacing:-0.05px">Webopedia ...</div>
<div class="t" style="left:5.0px;top:390.6px;font-size:11px;letter-spacing:-0.12px">This page describes the term data mining and lists other pages</div>
<div class="t" style="left:5.0px;top:403.6px;font-size:11px;letter-spacing:-0.12px">on the Web where you can find additional information.</div>
<div class="t" style="left:5.0px;top:416.6px;font-size:11px;color:#008000;letter-spacing:0.1px">http://www.webopedia.com/TERM/D/data_mining.html</div>
<div class="t" style="left:5.0px;top:442.9px;font-size:12px;color:#8a8a8a;letter-spacing:-0.3px">[5]</div>
<div class="t" style="left:22.0px;top:443.1px;font-size:11.8px;font-weight:bold;color:#2a7ad0;text-decoration:underline;letter-spacing:-0.05px">What is Data Mining, Predictive Analytics, Big Data</div>
<div class="t" style="left:5.0px;top:468.7px;font-size:11px;letter-spacing:-0.12px">Data Mining and predictive analytics help from Statsoft.</div>
<div class="t" style="left:5.0px;top:481.7px;font-size:11px;color:#008000;letter-spacing:0.1px">http://www.statsoft.com/textbook/data-mining-techniques/</div>
<div class="t" style="left:5.0px;top:507.8px;font-size:12px;color:#8a8a8a;letter-spacing:-0.3px">[6]</div>
<div class="t" style="left:22.0px;top:508.0px;font-size:11.8px;font-weight:bold;color:#2a7ad0;text-decoration:underline;letter-spacing:-0.05px">Data Mining - Instructional Technology Services</div>
<div class="t" style="left:5.0px;top:520.7px;font-size:11px;letter-spacing:-0.12px">Data mining is a powerful new technology with great potential</div>
<div class="t" style="left:5.0px;top:533.7px;font-size:11px;letter-spacing:-0.12px">to help companies focus on the most important information in</div>
<div class="t" style="left:5.0px;top:546.7px;font-size:11px;letter-spacing:-0.12px">the data they have collected about ...</div>
<div class="t" style="left:5.0px;top:559.7px;font-size:11px;color:#008000;letter-spacing:0.1px">http://www.laits.utexas.edu/~norman/BUS.FOR/course.mat/Alex/</div>
<div class="t" style="left:5.0px;top:597.8px;font-size:12px;color:#8a8a8a;letter-spacing:-0.3px">[7]</div>
<div class="t" style="left:22.0px;top:598.0px;font-size:11.8px;font-weight:bold;color:#2a7ad0;text-decoration:underline;letter-spacing:-0.05px">Statistical Data Mining Tutorials - The Auton Lab</div>
<div class="t" style="left:5.0px;top:610.7px;font-size:11px;letter-spacing:-0.12px">A set of 20 powerpoint lectures (many in PDF format) by</div>
<div class="t" style="left:5.0px;top:623.7px;font-size:11px;letter-spacing:-0.12px">Andrew Moore covering the major techniques, algorithms and</div>
<div class="t" style="left:5.0px;top:636.7px;font-size:11px;letter-spacing:-0.12px">statistical and machine learning methods</div>
</div>
<div class="sb" style="left:867px;top:182px;width:17px;height:640px;background:#f0f0f0"></div>
<div class="up" style="left:872px;top:189px"></div>
<div class="thumb" style="left:868px;top:199px;width:15px;height:62px"></div>
<div class="grip" style="left:872px;top:227px"></div>
<div class="dn" style="left:872px;top:813px"></div>
<!-- ATTRIBUTES PANEL -->
<div class="panel" style="left:899px;top:72px;width:334px;height:562px;border-color:#a0a0a0"></div>
<div class="a" style="left:900px;top:96px;width:332px;height:537px;border:3px solid #a6c0e2;border-top-width:1px;background:#f0f0f0"></div>
<div class="a" style="left:900px;top:73px;width:101px;height:24px;background:linear-gradient(#e2ecf7,#c0d4ec 55%,#98b4d8);border-right:1px solid #a0a0a0;border-radius:3px 3px 0 0"></div>
<div class="a" style="left:1001px;top:95px;width:231px;height:2px;background:#98b4d8"></div>
<svg class="a" style="left:903px;top:76px" width="18" height="18" viewBox="0 0 18 18"><g fill="#9cbfe0" stroke="#2a5a90" stroke-width="0.9"><circle cx="9" cy="4.6" r="3.3"/><circle cx="4.6" cy="12.2" r="3.3"/><circle cx="13.4" cy="12.2" r="3.3"/></g><path d="M7.5 4.6H10.5M3.1 12.2H6.1M11.9 12.2H14.9" stroke="#2a5a90" stroke-width="0.8"/></svg>
<div class="t" style="left:923px;top:79px">Attributes</div>
<svg class="a" style="left:982px;top:78px" width="12" height="12" viewBox="0 0 12 12"><path d="M0.8 2.8 L2.8 0.8 L6 4 L9.2 0.8 L11.2 2.8 L8 6 L11.2 9.2 L9.2 11.2 L6 8 L2.8 11.2 L0.8 9.2 L4 6 Z" fill="#fff" stroke="#707070" stroke-width="1" stroke-linejoin="round"/></svg>
<div class="a" style="left:1080px;top:75px;width:23px;height:20px;border:1px solid #6f6f6f;border-radius:3px;background:linear-gradient(#dedede,#d0d0d0)"></div>
<svg class="a" style="left:1082px;top:76px" width="20" height="20" viewBox="0 0 20 20"><circle cx="12.5" cy="13" r="5" fill="#fff" stroke="#2a5ab0" stroke-width="1.1"/><path d="M12.5 10.5V13.5H11.5" stroke="#2a5ab0" stroke-width="0.9" fill="none"/><circle cx="7" cy="6.8" r="5.8" fill="url(#gp)" stroke="#2a6a2a" stroke-width="0.6"/><path d="M5.2 3.8 L10 6.8 L5.2 9.8Z" fill="#fff"/></svg>
<svg class="a" style="left:1109px;top:78px" width="14" height="14" viewBox="0 0 14 14"><g fill="#c8d8f0" stroke="#5a7ab8" stroke-width="0.8"><rect x="0.5" y="0.5" width="2.5" height="2.5"/><rect x="4" y="5.5" width="2.5" height="2.5"/><rect x="4" y="10.5" width="2.5" height="2.5"/></g><path d="M1.8 3V11.8H4M1.8 6.8H4M7.5 6.8H11M7.5 11.8H11M5 1.8H12" stroke="#5a7ab8" stroke-width="0.9"/></svg>
<div class="tri" style="left:1128px;top:82px"></div>
<svg class="a" style="left:1143px;top:76px" width="16" height="17" viewBox="0 0 16 17"><rect x="0.5" y="0.5" width="15" height="16" rx="2" fill="#c4d6ee" stroke="#5a80b8"/><rect x="3.5" y="1" width="9" height="6" fill="#f6f9fd" stroke="#8aa6d0" stroke-width="0.6"/><rect x="3.5" y="6" width="9" height="1.2" fill="#e8c070"/><rect x="4" y="10.5" width="8" height="6" fill="#8aa8d0"/><rect x="5.3" y="12" width="5.4" height="3.5" fill="#f4f4f4"/><rect x="8.6" y="12.5" width="1.5" height="2.5" fill="#e0b050"/></svg>
<div class="tri" style="left:1163px;top:82px"></div>
<svg class="a" style="left:1177px;top:76px" width="13" height="8" viewBox="0 0 13 8"><path d="M1 1H12L6.5 6.5Z" fill="#fff" stroke="#666"/></svg>
<div class="minb" style="left:1197px;top:76px"></div>
<div class="maxb" style="left:1215px;top:76px"></div>
<!-- attributes content -->
<div class="a" style="left:903px;top:96px;width:310px;height:536px;overflow:hidden">
<div class="a" style="left:27px;top:3px;width:178px;height:3px;border:1px solid #c0c0c0;border-bottom-color:#e8e8e8;background:#e6e6e6"></div>
<div class="a" style="left:32px;top:17px;width:1px;height:4px;background:#a0a0a0"></div>
<div class="a" style="left:66px;top:17px;width:1px;height:4px;background:#a0a0a0"></div>
<div class="a" style="left:100px;top:17px;width:1px;height:4px;background:#a0a0a0"></div>
<div class="a" style="left:133px;top:17px;width:1px;height:4px;background:#a0a0a0"></div>
<div class="a" style="left:167px;top:17px;width:1px;height:4px;background:#a0a0a0"></div>
<div class="a" style="left:201px;top:17px;width:1px;height:4px;background:#a0a0a0"></div>
<div class="a" style="left:61px;top:-6px;width:10px;height:20px;border:1px solid #8a8a8a;border-radius:2px;background:linear-gradient(90deg,#f8f8f8,#dcdcdc)"></div>
<div class="field" style="left:220px;top:-6px;width:85px;height:21px"></div>
<div class="a" style="left:288px;top:-5px;width:16px;height:19px;border:1px solid #c8c8c8;background:#f4f4f4"></div>
<div class="up" style="left:292px;top:-2px;border-bottom-color:#3a5ab0"></div>
<div class="dn" style="left:292px;top:6px;border-top-color:#3a5ab0"></div>
<div class="t" style="left:225.0px;top:-2.2px;font-size:12px;">2.00</div>
<div class="t" style="left:19.0px;top:38.3px;font-size:12px;">Truncated label threshold</div>
<div class="a" style="left:27px;top:75px;width:178px;height:3px;border:1px solid #c0c0c0;border-bottom-color:#e8e8e8;background:#e6e6e6"></div>
<div class="a" style="left:32px;top:62px;width:1px;height:4px;background:#a0a0a0"></div>
<div class="a" style="left:32px;top:89px;width:1px;height:4px;background:#a0a0a0"></div>
<div class="a" style="left:66px;top:62px;width:1px;height:4px;background:#a0a0a0"></div>
<div class="a" style="left:66px;top:89px;width:1px;height:4px;background:#a0a0a0"></div>
<div class="a" style="left:100px;top:62px;width:1px;height:4px;background:#a0a0a0"></div>
<div class="a" style="left:100px;top:89px;width:1px;height:4px;background:#a0a0a0"></div>
<div class="a" style="left:133px;top:62px;width:1px;height:4px;background:#a0a0a0"></div>
<div class="a" style="left:133px;top:89px;width:1px;height:4px;background:#a0a0a0"></div>
<div class="a" style="left:167px;top:62px;width:1px;height:4px;background:#a0a0a0"></div>
<div class="a" style="left:167px;top:89px;width:1px;height:4px;background:#a0a0a0"></div>
<div class="a" style="left:201px;top:62px;width:1px;height:4px;background:#a0a0a0"></div>
<div class="a" style="left:201px;top:89px;width:1px;height:4px;background:#a0a0a0"></div>
<div class="a" style="left:138px;top:66px;width:10px;height:20px;border:1px solid #8a8a8a;border-radius:2px;background:linear-gradient(90deg,#f8f8f8,#dcdcdc)"></div>
<div class="field" style="left:220px;top:66px;width:85px;height:21px"></div>
<div class="a" style="left:288px;top:67px;width:16px;height:19px;border:1px solid #c8c8c8;background:#f4f4f4"></div>
<div class="up" style="left:292px;top:70px;border-bottom-color:#3a5ab0"></div>
<div class="dn" style="left:292px;top:78px;border-top-color:#3a5ab0"></div>
<div class="t" style="left:225.0px;top:69.8px;font-size:12px;">0.65</div>
<div class="tri" style="left:5px;top:118px"></div>
<div class="t" style="left:19.0px;top:114.8px;font-size:12px;">Matrix model</div>
<div class="a" style="left:4px;top:131px;width:300px;height:1px;background:#a8a8a8"></div>
<div class="t" style="left:19.0px;top:142.8px;font-size:12px;">Factorization method (required)</div>
<div class="combo" style="left:19px;top:161px;width:285px;height:23px"></div>
<div class="t" style="left:24.0px;top:167.3px;font-size:12px;">Nonnegative Matrix Factorization ED Factory</div>
<div class="t" style="left:19.0px;top:196.7px;font-size:12px;">Factorization quality (required)</div>
<div class="combo" style="left:19px;top:215px;width:285px;height:22px"></div>
<div class="t" style="left:24.0px;top:220.8px;font-size:12px;">High</div>
<div class="t" style="left:19.0px;top:249.3px;font-size:12px;">Maximum matrix size</div>
<div class="field" style="left:19px;top:267px;width:285px;height:21px"></div>
<div class="a" style="left:288px;top:268px;width:16px;height:19px;border:1px solid #c8c8c8;background:#f4f4f4"></div>
<div class="up" style="left:292px;top:271px;border-bottom-color:#3a5ab0"></div>
<div class="dn" style="left:292px;top:279px;border-top-color:#3a5ab0"></div>
<div class="t" style="left:24.0px;top:272.8px;font-size:12px;">37500</div>
<div class="t" style="left:19.0px;top:301.7px;font-size:12px;">Maximum word document frequency</div>
<div class="a" style="left:27px;top:338px;width:178px;height:3px;border:1px solid #c0c0c0;border-bottom-color:#e8e8e8;background:#e6e6e6"></div>
<div class="a" style="left:32px;top:325px;width:1px;height:4px;background:#a0a0a0"></div>
<div class="a" style="left:32px;top:352px;width:1px;height:4px;background:#a0a0a0"></div>
<div class="a" style="left:66px;top:325px;width:1px;height:4px;background:#a0a0a0"></div>
<div class="a" style="left:66px;top:352px;width:1px;height:4px;background:#a0a0a0"></div>
<div class="a" style="left:100px;top:325px;width:1px;height:4px;background:#a0a0a0"></div>
<div class="a" style="left:100px;top:352px;width:1px;height:4px;background:#a0a0a0"></div>
<div class="a" style="left:133px;top:325px;width:1px;height:4px;background:#a0a0a0"></div>
<div class="a" style="left:133px;top:352px;width:1px;height:4px;background:#a0a0a0"></div>
<div class="a" style="left:167px;top:325px;width:1px;height:4px;background:#a0a0a0"></div>
<div class="a" style="left:167px;top:352px;width:1px;height:4px;background:#a0a0a0"></div>
<div class="a" style="left:201px;top:325px;width:1px;height:4px;background:#a0a0a0"></div>
<div class="a" style="left:201px;top:352px;width:1px;height:4px;background:#a0a0a0"></div>
<div class="a" style="left:179px;top:329px;width:10px;height:20px;border:1px solid #8a8a8a;border-radius:2px;background:linear-gradient(90deg,#f8f8f8,#dcdcdc)"></div>
<div class="field" style="left:220px;top:330px;width:85px;height:21px"></div>
<div class="a" style="left:288px;top:331px;width:16px;height:19px;border:1px solid #c8c8c8;background:#f4f4f4"></div>
<div class="up" style="left:292px;top:334px;border-bottom-color:#3a5ab0"></div>
<div class="dn" style="left:292px;top:342px;border-top-color:#3a5ab0"></div>
<div class="t" style="left:225.0px;top:333.8px;font-size:12px;">0.90</div>
<div class="t" style="left:19.0px;top:373.5px;font-size:12px;">Term weighting (required)</div>
<div class="combo" style="left:19px;top:391px;width:285px;height:22px"></div>
<div class="t" style="left:24.0px;top:397.3px;font-size:12px;">Log Tf Idf Term Weighting</div>
<div class="tri" style="left:5px;top:434px"></div>
<div class="t" style="left:19.0px;top:431.3px;font-size:12px;">Multilingual clustering</div>
<div class="a" style="left:4px;top:447px;width:300px;height:1px;background:#a8a8a8"></div>
<div class="t" style="left:19.0px;top:459.1px;font-size:12px;">Default clustering language (required)</div>
<div class="combo" style="left:19px;top:477px;width:285px;height:22px"></div>
<div class="t" style="left:24.0px;top:483.8px;font-size:12px;">English</div>
<div class="t" style="left:19.0px;top:512.5px;font-size:12px;">Language aggregation strategy (required)</div>
<div class="combo" style="left:19px;top:530px;width:285px;height:22px"></div>
</div>
<div class="sb" style="left:1213px;top:96px;width:16px;height:536px;background:#f0f0f0"></div>
<div class="up" style="left:1217px;top:102px"></div>
<div class="thumb" style="left:1214px;top:339px;width:14px;height:159px"></div>
<div class="grip" style="left:1217px;top:416px"></div>
<div class="dn" style="left:1217px;top:623px"></div>

<!-- ATTRIBUTE-INFO PANEL -->
<div class="panel" style="left:900px;top:640px;width:333px;height:188px"></div>
<div class="a" style="left:901px;top:641px;width:118px;height:22px;background:linear-gradient(#fff,#f6f6f6);border-right:1px solid #a0a0a0;border-radius:3px 0 0 0"></div>
<div class="tabline" style="left:1019px;top:662px;width:213px"></div>
<svg class="a" style="left:903px;top:643px" width="17" height="17" viewBox="0 0 17 17"><circle cx="8.5" cy="8.5" r="7" fill="#fff" stroke="#3a6ab0" stroke-width="1.3"/><text x="5" y="12.5" font-size="11" font-weight="bold" fill="#3a6ab0" font-family="Liberation Sans">?</text></svg>
<div class="t" style="left:923px;top:646px">Attribute Info</div>
<svg class="a" style="left:1001px;top:646px" width="12" height="12" viewBox="0 0 12 12"><path d="M0.8 2.8 L2.8 0.8 L6 4 L9.2 0.8 L11.2 2.8 L8 6 L11.2 9.2 L9.2 11.2 L6 8 L2.8 11.2 L0.8 9.2 L4 6 Z" fill="#fff" stroke="#707070" stroke-width="1" stroke-linejoin="round"/></svg>
<div class="a" style="left:1170px;top:642px;width:23px;height:20px;border:1px solid #6f6f6f;border-radius:3px;background:linear-gradient(#dedede,#d0d0d0)"></div>
<svg class="a" style="left:1174px;top:644px" width="16" height="16" viewBox="0 0 16 16"><circle cx="6" cy="6" r="5" fill="#fff" stroke="#3a6ab0"/><text x="3.5" y="9.5" font-size="8" font-weight="bold" fill="#3a6ab0" font-family="Liberation Sans">?</text><path d="M7 14 L14 6 L15.5 7.5 L9 15Z" fill="#f0c060" stroke="#a07020" stroke-width="0.7"/></svg>
<div class="minb" style="left:1198px;top:644px"></div>
<div class="maxb" style="left:1216px;top:644px"></div>
<div class="a" style="left:901px;top:664px;width:313px;height:163px;background:#ffffe1"></div>
<div class="sb" style="left:1214px;top:663px;width:17px;height:164px;background:#f0f0f0"></div>
<div class="up" style="left:1219px;top:671px"></div>
<div class="thumb" style="left:1215px;top:684px;width:14px;height:65px"></div>
<div class="grip" style="left:1218px;top:713px"></div>
<div class="dn" style="left:1219px;top:815px"></div>
<div class="a" style="left:0;top:663px;width:1213px;height:164px;overflow:hidden">
<div class="t" style="left:907.0px;top:14.3px;font-size:12px;font-weight:bold">Attribute:</div>
<div class="t" style="left:946.0px;top:27.5px;font-size:11px;letter-spacing:-0.05px">Default clustering language</div>
<div class="t" style="left:907.0px;top:46.4px;font-size:12px;font-weight:bold">Description:</div>
<div class="t" style="left:946.0px;top:60.0px;font-size:11px;letter-spacing:-0.05px">Default clustering language. The default language to</div>
<div class="t" style="left:946.0px;top:73.1px;font-size:11px;letter-spacing:-0.05px">use for documents with undefined</div>
<div class="t" style="left:946.0px;top:85.8px;font-size:11.5px;font-family:Liberation Mono;letter-spacing:-0.05px">org.carrot2.core.Document.LANGUAGE.</div>
<div class="t" style="left:907.0px;top:105.1px;font-size:12px;font-weight:bold">Key:</div>
<div class="t" style="left:946.0px;top:118.3px;font-size:11px;letter-spacing:-0.05px">MultilingualClustering.defaultLanguage</div>
<div class="t" style="left:907.0px;top:136.8px;font-size:12px;font-weight:bold">Type:</div>
<div class="t" style="left:946.0px;top:150.8px;font-size:11px;letter-spacing:-0.05px">LanguageCode</div>
</div>
<!-- ANNOTATIONS -->
<div class="box" style="left:167px;top:212px;width:237px;height:82px"></div>
<div class="red" style="left:190px;top:219px;transform:scaleX(0.963)">current algorithm</div>
<div class="red" style="left:190px;top:251px;transform:scaleX(0.939)">and its attributes</div>
<div class="box" style="left:1066px;top:206px;width:165px;height:82px"></div>
<div class="red" style="left:1080px;top:213px;font-size:24px;letter-spacing:0.38px">Save/ export</div>
<div class="red" style="left:1080px;top:245px;font-size:24px;letter-spacing:0.8px">attributes</div>
<div class="box" style="left:492px;top:726px;width:317px;height:114px"></div>
<div class="red" style="left:511px;top:732px;transform:scaleX(0.917)">hover over</div>
<div class="red" style="left:511px;top:764px;transform:scaleX(0.923)">an attribute to see its key</div>
<div class="red" style="left:511px;top:796px;transform:scaleX(0.937)">and description</div>
<svg class="a" style="left:0;top:0" width="1241" height="862" viewBox="0 0 1241 862">
<g opacity="0.9">
<path d="M186 174.5 L220 202.5 L849.5 99" fill="none" stroke="#ff2a2a" stroke-width="5.8" stroke-linejoin="miter" stroke-miterlimit="10"/>
<path d="M146 144 L193 165 L177.6 184.5Z M897.2 89 L846.9 85.3 L850.8 109.3Z" fill="#ff2a2a"/>
<path d="M1153 94.3 L1164.6 142.6 L1156 142.6 L1155.5 206 L1149.5 206 L1149.5 142.6 L1139.9 142.6 Z" fill="#ff2a2a"/>
<path d="M895 605 L815.5 765.5 L853 770.5" fill="none" stroke="#ff2a2a" stroke-width="5.8" stroke-linejoin="miter" stroke-miterlimit="2.2"/>
<path d="M916 562.5 L883.5 601.5 L905 611.3Z M903.6 774.2 L852.4 758.7 L852.4 782.4Z" fill="#ff2a2a"/>
</g>
</svg>
</body></html>
